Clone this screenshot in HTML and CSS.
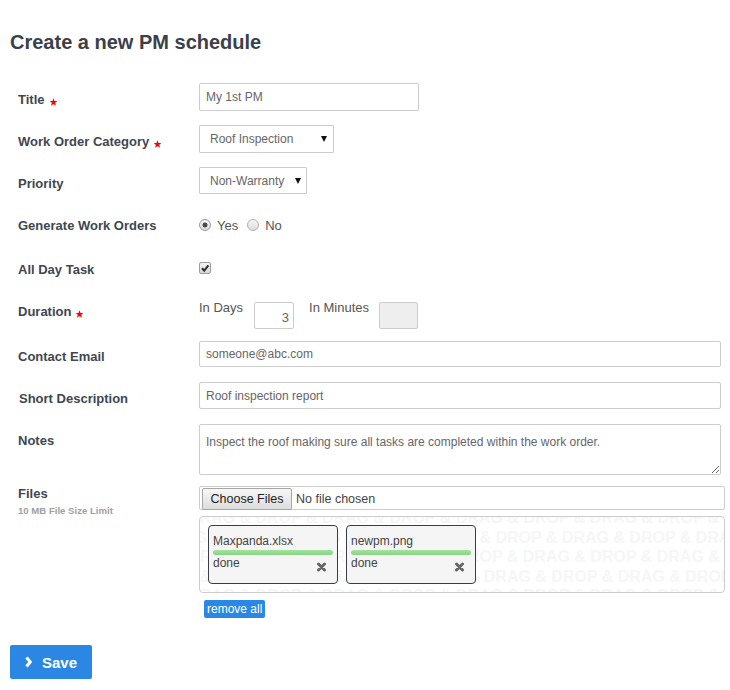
FILE: index.html
```html
<!DOCTYPE html>
<html lang="en">
<head>
<meta charset="utf-8">
<title>Create a new PM schedule</title>
<link rel="stylesheet" href="styles.css">
</head>
<body>
<div class="page">
  <h1 class="heading">Create a new PM schedule</h1>
  <form class="form">
    <label class="lbl">Title<svg class="req" viewBox="0 0 10 10"><polygon points="5,0.2 6.3,3.6 9.9,3.7 7.1,6 8.1,9.7 5,7.6 1.9,9.7 2.9,6 0.1,3.7 3.7,3.6"/></svg></label>
    <div class="ctl"><input class="inp inp-title" type="text" value="My 1st PM"></div>

    <label class="lbl">Work Order Category<svg class="req" viewBox="0 0 10 10"><polygon points="5,0.2 6.3,3.6 9.9,3.7 7.1,6 8.1,9.7 5,7.6 1.9,9.7 2.9,6 0.1,3.7 3.7,3.6"/></svg></label>
    <div class="ctl"><span class="sel sel-cat"><select class="select"><option>Roof Inspection</option></select></span></div>

    <label class="lbl">Priority</label>
    <div class="ctl"><span class="sel sel-pri"><select class="select"><option>Non-Warranty</option></select></span></div>

    <label class="lbl lbl-radio">Generate Work Orders</label>
    <div class="ctl choice">
      <input class="radio" type="radio" name="gen" checked><span class="opt opt-yes">Yes</span>
      <input class="radio" type="radio" name="gen"><span class="opt">No</span>
    </div>

    <label class="lbl lbl-check">All Day Task</label>
    <div class="ctl choice">
      <span class="checkbox"><svg viewBox="0 0 10 10"><path d="M2 5.2 L4.2 7.6 L8.4 2.4"/></svg></span>
    </div>

    <label class="lbl lbl-dur">Duration<svg class="req" viewBox="0 0 10 10"><polygon points="5,0.2 6.3,3.6 9.9,3.7 7.1,6 8.1,9.7 5,7.6 1.9,9.7 2.9,6 0.1,3.7 3.7,3.6"/></svg></label>
    <div class="ctl duration">
      <span class="dur-txt">In Days</span>
      <input class="inp inp-days" type="text" value="3">
      <span class="dur-txt dur-min">In Minutes</span>
      <input class="inp inp-mins" type="text" disabled>
    </div>

    <label class="lbl lbl-contact">Contact Email</label>
    <div class="ctl"><input class="inp inp-wide inp-email" type="text" value="someone@abc.com"></div>

    <label class="lbl lbl-short">Short Description</label>
    <div class="ctl"><input class="inp inp-wide" type="text" value="Roof inspection report"></div>

    <label class="lbl">Notes</label>
    <div class="ctl"><textarea class="notes">Inspect the roof making sure all tasks are completed within the work order.</textarea></div>

    <div class="lbl lbl-files">Files<span class="limit">10 MB File Size Limit</span></div>
    <div class="ctl">
      <div class="filebox"><span class="choose">Choose Files</span><span class="nofile">No file chosen</span></div>
      <div class="dropzone">
        <div class="watermark" aria-hidden="true">
          <div class="wm wm1">DRAG &amp; DROP &amp; DRAG &amp; DROP &amp; DRAG &amp; DROP &amp; DRAG &amp; DROP &amp; DRAG &amp; DROP &amp; DRAG &amp; DROP</div>
          <div class="wm wm2">DRAG &amp; DROP &amp; DRAG &amp; DROP &amp; DRAG &amp; DROP &amp; DRAG &amp; DROP &amp; DRAG &amp; DROP &amp; DRAG &amp; DROP</div>
          <div class="wm wm3">DRAG &amp; DROP &amp; DRAG &amp; DROP &amp; DRAG &amp; DROP &amp; DRAG &amp; DROP &amp; DRAG &amp; DROP &amp; DRAG &amp; DROP</div>
          <div class="wm wm4">DRAG &amp; DROP &amp; DRAG &amp; DROP &amp; DRAG &amp; DROP &amp; DRAG &amp; DROP &amp; DRAG &amp; DROP &amp; DRAG &amp; DROP</div>
          <div class="wm wm5">DRAG &amp; DROP &amp; DRAG &amp; DROP &amp; DRAG &amp; DROP &amp; DRAG &amp; DROP &amp; DRAG &amp; DROP &amp; DRAG &amp; DROP</div>
        </div>
        <div class="card">
          <div class="fname">Maxpanda.xlsx</div>
          <div class="bar"></div>
          <div class="status"><span>done</span><svg class="x" viewBox="0 0 10 10"><path d="M2 2 L8 8 M8 2 L2 8"/></svg></div>
        </div>
        <div class="card">
          <div class="fname">newpm.png</div>
          <div class="bar"></div>
          <div class="status"><span>done</span><svg class="x" viewBox="0 0 10 10"><path d="M2 2 L8 8 M8 2 L2 8"/></svg></div>
        </div>
      </div>
      <button type="button" class="remove">remove all</button>
    </div>
  </form>
  <button type="button" class="save"><svg class="chev" viewBox="0 0 6 11"><polyline points="1.2,1.4 4.6,5.5 1.2,9.6"/></svg><span>Save</span></button>
</div>
</body>
</html>
```
FILE: styles.css
```css
* { box-sizing: border-box; }
html, body { margin: 0; padding: 0; background: #fff; }
body {
  font-family: "Liberation Sans", Arial, sans-serif;
  color: #3c4049;
}
.page { padding: 30px 10px 0 10px; }
.heading {
  margin: 0;
  font-size: 20px;
  line-height: 24px;
  font-weight: bold;
  color: #3b4049;
}
.form {
  display: grid;
  grid-template-columns: 181px 526px;
  grid-template-rows: 42px 42px 44px 43px 48px 39px 41px 42px 62px auto;
  margin-top: 29px;
  padding-left: 8px;
  align-items: start;
}
.lbl {
  display: block;
  font-size: 13px;
  font-weight: bold;
  line-height: 17px;
  padding-top: 8px;
  color: #41464f;
  white-space: nowrap;
}
.lbl-radio { padding-top: 6px; }
.lbl-check { padding-top: 7px; }
.lbl-dur { padding-top: 1px; }
.lbl-contact { padding-top: 7px; }
.lbl-short { padding-left: 1px; }
.lbl-files { padding-top: 0; line-height: 15px; }
.limit {
  display: block;
  margin-top: 4px;
  font-size: 9.6px;
  line-height: 12px;
  color: #a0a0a0;
  font-weight: bold;
}
.req {
  width: 9px;
  height: 8px;
  margin-left: 4px;
  vertical-align: -2px;
  fill: #f00;
}
.ctl { min-width: 0; }
.inp {
  display: block;
  font-family: inherit;
  font-size: 12px;
  color: #666;
  border: 1px solid #ccc;
  border-radius: 2px;
  background: #fff;
  padding: 0 6px;
  margin: 0;
  outline: none;
}
.inp-title { width: 220px; height: 28px; }
.inp-wide { width: 522px; height: 27px; }
.inp-email { height: 26px; }
.sel { position: relative; display: inline-block; vertical-align: top; }
.sel::after {
  content: "";
  position: absolute;
  top: 11px;
  border-left: 3px solid transparent;
  border-right: 3px solid transparent;
  border-top: 6px solid #111;
  pointer-events: none;
}
.sel-cat::after { right: 7px; }
.sel-pri::after { right: 6px; }
.select {
  appearance: none;
  -webkit-appearance: none;
  display: block;
  height: 28px;
  font-family: inherit;
  font-size: 12px;
  color: #666;
  border: 1px solid #ccc;
  border-radius: 1px;
  background: #fff;
  padding: 0 0 0 10px;
  margin: 0;
}
.sel-cat .select { width: 135px; }
.sel-pri .select { width: 108px; height: 27px; }
.choice {
  display: flex;
  align-items: center;
  height: 28px;
}
.radio {
  appearance: none;
  -webkit-appearance: none;
  width: 12px;
  height: 12px;
  margin: 0;
  border: 1px solid #b0b0b0;
  border-radius: 50%;
  background: linear-gradient(#f6f6f6, #dedede);
}
.radio:checked {
  border-color: #9a9a9a;
  background: radial-gradient(circle, #4a4a4a 0 2.2px, transparent 2.8px), linear-gradient(#f6f6f6, #dcdcdc);
}
.opt {
  font-size: 13px;
  color: #555;
  margin-left: 6px;
}
.opt-yes { margin-right: 9px; }
.checkbox {
  display: block;
  width: 12px;
  height: 12px;
  border: 1px solid #9c9c9c;
  border-radius: 2px;
  background: linear-gradient(#f4f4f4, #d6d6d6);
}
.checkbox svg {
  display: block;
  width: 10px;
  height: 10px;
  fill: none;
  stroke: #2e2e2e;
  stroke-width: 2;
}
.duration {
  display: flex;
  align-items: flex-start;
}
.dur-txt {
  font-size: 13px;
  line-height: 11px;
  color: #555;
  white-space: nowrap;
}
.inp-days {
  width: 40px;
  height: 27px;
  margin-left: 11px;
  text-align: right;
  padding: 3px 4px 0 0;
  font-size: 13px;
}
.dur-min { margin-left: 15px; }
.inp-mins {
  width: 39px;
  height: 27px;
  margin-left: 10px;
  background: #eee;
}
.notes {
  display: block;
  width: 522px;
  height: 51px;
  font-family: inherit;
  font-size: 12px;
  line-height: 16px;
  color: #666;
  border: 1px solid #ccc;
  border-radius: 2px;
  padding: 9px 6px 0;
  margin: 0;
  resize: vertical;
  outline: none;
}
.filebox {
  display: flex;
  align-items: center;
  width: 526px;
  height: 24px;
  border: 1px solid #ccc;
  border-radius: 2px;
  padding: 2px 0 0 2px;
}
.choose {
  display: flex;
  align-items: center;
  justify-content: center;
  width: 90px;
  height: 22px;
  margin-top: -1px;
  border: 1px solid #a6a6a6;
  border-radius: 2px;
  background: linear-gradient(#f7f7f7, #dddddd);
  font-size: 12.5px;
  color: #222;
}
.nofile {
  margin-left: 4px;
  font-size: 12.5px;
  color: #444;
}
.dropzone {
  position: relative;
  display: flex;
  gap: 8px;
  width: 526px;
  height: 77px;
  margin-top: 6px;
  padding: 8px;
  border: 1px solid #ccc;
  border-radius: 4px;
  overflow: hidden;
}
.watermark {
  position: absolute;
  left: 0;
  right: 0;
  top: -9px;
  font-size: 16px;
  font-weight: bold;
  line-height: 19.5px;
  color: #f6f6f6;
  white-space: nowrap;
  pointer-events: none;
}
.wm1 { margin-left: -12px; }
.wm2 { margin-left: -40px; }
.wm3 { margin-left: -79px; }
.wm4 { margin-left: -118px; }
.wm5 { margin-left: -12px; }
.card {
  position: relative;
  width: 130px;
  height: 59px;
  padding: 8px 4px 0;
  border: 1px solid #383c44;
  border-radius: 4px;
  background: #f5f5f5;
}
.fname {
  font-size: 12px;
  line-height: 14px;
  color: #444;
}
.bar {
  height: 5px;
  margin-top: 2px;
  border-radius: 3px;
  background: linear-gradient(#a3e39f, #86d480);
}
.status {
  display: flex;
  justify-content: space-between;
  align-items: flex-end;
  margin-top: 1px;
  font-size: 12px;
  line-height: 14px;
  color: #444;
}
.x {
  width: 11px;
  height: 10px;
  margin-right: 6px;
  margin-bottom: -2px;
  fill: none;
  stroke: #666;
  stroke-width: 3;
  stroke-linecap: round;
}
.remove {
  display: block;
  height: 18px;
  margin: 7px 0 0 5px;
  padding: 0 3px;
  border: none;
  border-radius: 2px;
  background: #2a87e4;
  color: #fff;
  font-family: inherit;
  font-size: 12px;
  line-height: 18px;
}
.save {
  display: flex;
  align-items: center;
  width: 82px;
  height: 34px;
  margin-top: 27px;
  padding: 0 0 0 15px;
  border: none;
  border-radius: 2px;
  background: #2a87e4;
  color: #fff;
  font-family: inherit;
  font-size: 15px;
  font-weight: bold;
}
.chev {
  width: 7px;
  height: 12px;
  margin-right: 10px;
  fill: none;
  stroke: #fff;
  stroke-width: 2.8;
}
```
